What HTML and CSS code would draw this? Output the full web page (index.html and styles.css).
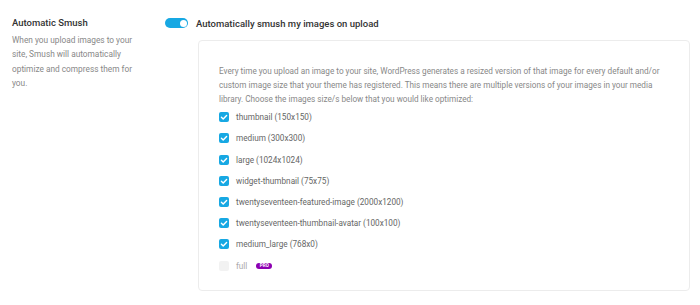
FILE: index.html
```html
<!DOCTYPE html>
<html lang="en">
<head>
<meta charset="utf-8">
<title>Automatic Smush</title>
<link rel="stylesheet" href="styles.css">
</head>
<body>
<div class="row">
  <div class="label-col">
    <h3 class="title">Automatic Smush</h3>
    <p class="desc">When you upload images to your site, Smush will automatically optimize and compress them for you.</p>
  </div>
  <div class="content-col">
    <label class="toggle-row">
      <span class="toggle"><span class="knob"></span></span>
      <span class="toggle-label">Automatically smush my images on upload</span>
    </label>
    <div class="panel">
      <p class="panel-text">Every time you upload an image to your site, WordPress generates a resized version of that image for every default and/or custom image size that your theme has registered. This means there are multiple versions of your images in your media library. Choose the images size/s below that you would like optimized:</p>
      <ul class="sizes">
        <li class="size"><span class="cb"><svg viewBox="0 0 10 10"><path d="M2.4 5.2 L4.2 6.9 L7.6 3.4" /></svg></span><span>thumbnail (150x150)</span></li>
        <li class="size"><span class="cb"><svg viewBox="0 0 10 10"><path d="M2.4 5.2 L4.2 6.9 L7.6 3.4" /></svg></span><span>medium (300x300)</span></li>
        <li class="size"><span class="cb"><svg viewBox="0 0 10 10"><path d="M2.4 5.2 L4.2 6.9 L7.6 3.4" /></svg></span><span>large (1024x1024)</span></li>
        <li class="size"><span class="cb"><svg viewBox="0 0 10 10"><path d="M2.4 5.2 L4.2 6.9 L7.6 3.4" /></svg></span><span>widget-thumbnail (75x75)</span></li>
        <li class="size"><span class="cb"><svg viewBox="0 0 10 10"><path d="M2.4 5.2 L4.2 6.9 L7.6 3.4" /></svg></span><span>twentyseventeen-featured-image (2000x1200)</span></li>
        <li class="size"><span class="cb"><svg viewBox="0 0 10 10"><path d="M2.4 5.2 L4.2 6.9 L7.6 3.4" /></svg></span><span>twentyseventeen-thumbnail-avatar (100x100)</span></li>
        <li class="size"><span class="cb"><svg viewBox="0 0 10 10"><path d="M2.4 5.2 L4.2 6.9 L7.6 3.4" /></svg></span><span>medium_large (768x0)</span></li>
        <li class="size disabled"><span class="cb off"></span><span>full</span><span class="pro">PRO</span></li>
      </ul>
    </div>
  </div>
</div>
</body>
</html>
```
FILE: styles.css
```css
html, body {
  margin: 0;
  padding: 0;
  background: #fff;
}
body {
  font-family: Roboto, "Liberation Sans", Arial, sans-serif;
  color: #333;
}
.row {
  display: flex;
  padding: 16px 10px 0 12px;
}
.label-col {
  width: 153px;
  flex: none;
}
.title {
  margin: 0;
  font-size: 9.5px;
  line-height: 14px;
  font-weight: 500;
  color: #333;
}
.desc {
  margin: 3px 0 0;
  width: 128px;
  font-size: 8.3px;
  line-height: 14.3px;
  color: #888;
}
.content-col {
  flex: 1;
}
.toggle-row {
  display: flex;
  align-items: center;
  gap: 8px;
  height: 14px;
}
.toggle {
  width: 23px;
  height: 10px;
  border-radius: 6px;
  background: #17a8e3;
  display: flex;
  align-items: center;
  justify-content: flex-end;
  padding-right: 1.5px;
  box-sizing: border-box;
  flex: none;
}
.knob {
  width: 7px;
  height: 7px;
  border-radius: 50%;
  background: #fff;
}
.toggle-label {
  font-size: 9.5px;
  font-weight: 500;
  color: #333;
}
.panel {
  margin: 10px 0 0 33px;
  border: 1px solid #ececec;
  border-radius: 4px;
  padding: 23px 20px 16px 20px;
  height: 251px;
  box-sizing: border-box;
}
.panel-text {
  margin: 0;
  font-size: 8.2px;
  line-height: 14.2px;
  color: #888;
}
.sizes {
  list-style: none;
  margin: 0;
  padding: 0;
}
.size {
  display: flex;
  align-items: center;
  height: 21.2px;
  font-size: 8.2px;
  color: #666;
}
.cb {
  width: 10px;
  height: 10px;
  border-radius: 2px;
  background: #17a8e3;
  margin-right: 7px;
  flex: none;
  display: flex;
}
.cb svg {
  width: 10px;
  height: 10px;
}
.cb path {
  fill: none;
  stroke: #fff;
  stroke-width: 1.4;
  stroke-linecap: round;
  stroke-linejoin: round;
}
.cb.off {
  background: #f2f2f2;
}
.disabled {
  color: #aaa;
}
.pro {
  margin-left: 9px;
  background: #8d00b1;
  color: #fff;
  font-size: 4.5px;
  font-weight: 700;
  line-height: 6px;
  height: 6px;
  padding: 0 3.5px;
  border-radius: 3px;
}
```
